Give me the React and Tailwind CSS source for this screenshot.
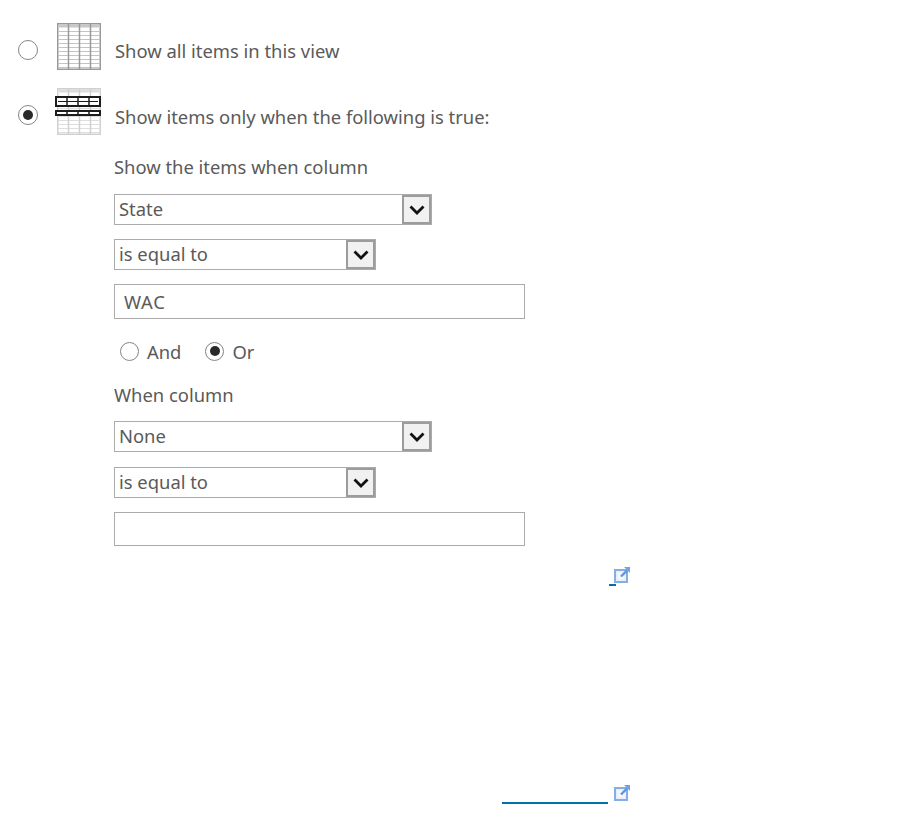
import React from "react";

const Radio = ({ checked, size = "lg" }) => (
  <span className={`flex items-center justify-center rounded-full border border-[#858585] bg-white ${size === "lg" ? "size-[20px]" : "size-[19px]"}`}>
    {checked && <span className="size-[10px] rounded-full bg-[#2a2a2a]" />}
  </span>
);

const TableIcon = ({ filtered }) => {
  const line = filtered ? "#d0d0d0" : "#999999";
  const rows = [];
  for (let y = 8; y < 46; y += 4) rows.push(y);
  return (
    <svg width="44" height="47" viewBox="0 0 44 47" className="block overflow-visible">
      <rect x="0.75" y="0.75" width="42.5" height="45.5" fill="#fff" stroke={line} strokeWidth="1.5" />
      <path d="M2 3h40" stroke={filtered ? "#dcdcdc" : "#c8c8c8"} strokeWidth="3" />
      {rows.map((y) => (
        <line key={y} x1="1" x2="43" y1={y + 0.5} y2={y + 0.5} stroke={filtered ? "#dedede" : "#c4c4c4"} />
      ))}
      {[11.5, 22.5, 33.5].map((x) => (
        <line key={x} x1={x} x2={x} y1="1" y2="46" stroke={line} strokeWidth="1.5" />
      ))}
      {filtered && (
        <g fill="#fff" stroke="#1c1c1c" strokeWidth="2">
          <rect x="-1" y="9" width="44" height="9" />
          <rect x="-1" y="23" width="44" height="4" />
          <path d="M10 9v9M21 9v9M32 9v9M10 23v4M21 23v4M32 23v4" fill="none" strokeWidth="1.5" />
          <path d="M1 13.5h40" fill="none" strokeWidth="1" />
        </g>
      )}
    </svg>
  );
};

const Select = ({ value, width }) => (
  <div className={`flex h-[31px] ${width} items-stretch border border-[#ababab] bg-white`}>
    <span className="flex-1 pl-[4px] leading-[28px]">{value}</span>
    <span className="flex w-[29px] items-center justify-center border-2 border-[#9c9c9c] bg-[#f1f1f1]">
      <svg width="16" height="10" viewBox="0 0 16 10">
        <path d="M1.5 1.5 8 8 14.5 1.5" fill="none" stroke="#111" strokeWidth="2.8" />
      </svg>
    </span>
  </div>
);

const ExternalIcon = () => (
  <svg width="16" height="16" viewBox="0 0 16 16" className="block">
    <rect x="0" y="2" width="14" height="14" fill="#c9dcf5" />
    <rect x="1" y="3" width="12" height="12" fill="#e6effb" stroke="#86aee6" strokeWidth="2" />
    <rect x="3.5" y="5.5" width="7" height="7" fill="#f4f8fd" />
    <path d="M7 9.5 13 3.5" stroke="#5d95df" strokeWidth="2.4" />
    <path d="M10 0H16V6Z" fill="#6ea3e6" />
  </svg>
);

export default function App() {
  return (
    <div className="min-h-[838px] w-[906px] bg-white pt-[23px] text-[18.4px] text-[#5a5a5a] [font-family:'Noto_Sans','Open_Sans',sans-serif]">
      <div className="flex items-center pl-[18px]">
        <span className="mt-[7px]"><Radio /></span>
        <div className="ml-[19px]"><TableIcon /></div>
        <span className="ml-[14px] mt-[8px]">Show all items in this view</span>
      </div>

      <div className="mt-[18px] flex items-center pl-[18px]">
        <span className="mt-[7px]"><Radio checked /></span>
        <div className="ml-[19px]"><TableIcon filtered /></div>
        <span className="ml-[14px] mt-[11px]">Show items only when the following is true:</span>
      </div>

      <div className="ml-[114px] mt-[20px]">
        <div className="leading-[24px]">Show the items when column</div>
        <Select value="State" width="w-[318px] mt-[15px]" />
        <Select value="is equal to" width="w-[262px] mt-[14px]" />
        <div className="mt-[14px] flex h-[35px] w-[411px] items-center border border-[#ababab] bg-white pl-[9px] tracking-[0.04em]">WAC</div>
        <div className="mt-[20px] flex h-[24px] items-center pl-[6px]">
          <Radio size="sm" />
          <span className="ml-[8px] mt-[2px]">And</span>
          <span className="ml-[24px]"><Radio checked size="sm" /></span>
          <span className="ml-[8px] mt-[2px]">Or</span>
        </div>
        <div className="mt-[20px] leading-[24px]">When column</div>
        <Select value="None" width="w-[318px] mt-[14px]" />
        <Select value="is equal to" width="w-[262px] mt-[15px]" />
        <div className="mt-[14px] h-[34px] w-[411px] border border-[#ababab] bg-white" />
      </div>

      <div className="mt-[21px] flex h-[19px] w-[630px] justify-end">
        <span className="mr-[-2px] mt-auto h-[2px] w-[7px] bg-[#0072a8]" />
        <ExternalIcon />
      </div>

      <div className="mt-[199px] flex h-[19px] w-[630px] justify-end">
        <span className="mr-[6px] mt-auto h-[2px] w-[106px] bg-[#0072a8]" />
        <ExternalIcon />
      </div>
    </div>
  );
}
